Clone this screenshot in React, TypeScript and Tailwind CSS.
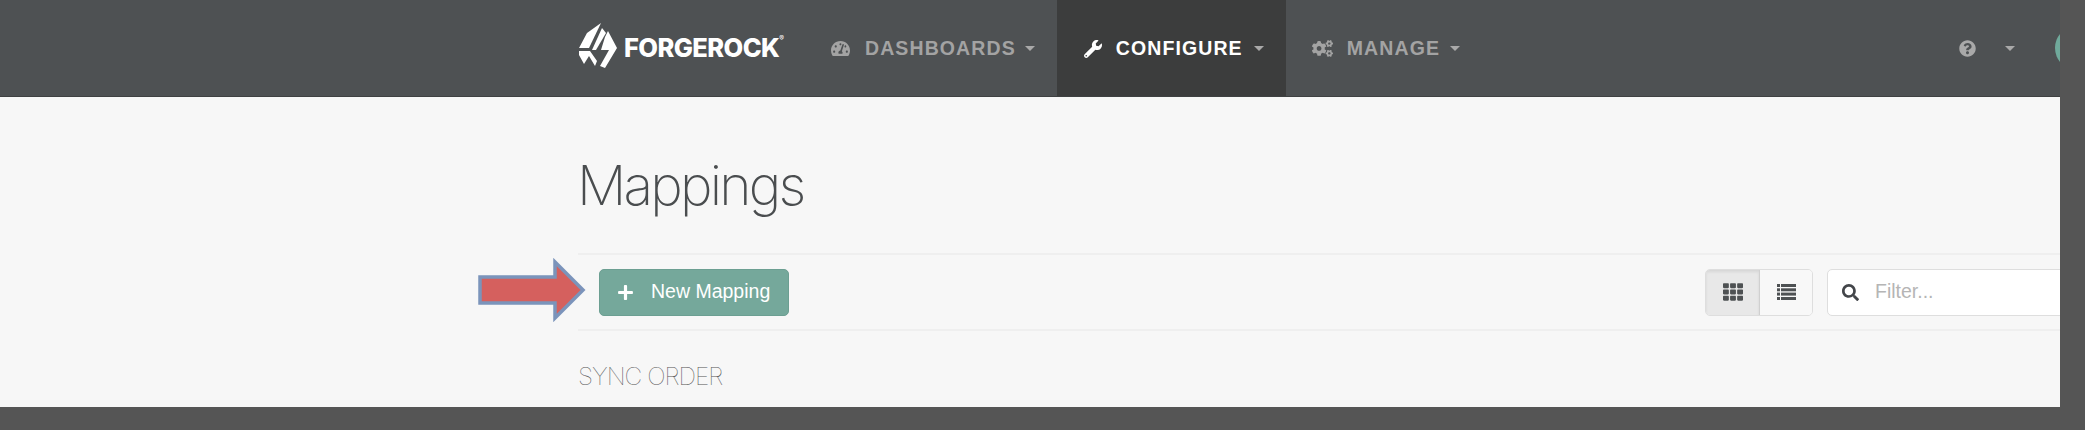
import {
  FaCogs,
  FaPlus,
  FaQuestionCircle,
  FaSearch,
  FaTachometerAlt,
  FaTh,
  FaWrench,
} from "react-icons/fa";

const sans = "font-['Liberation_Sans',Arial,sans-serif]";

function Caret() {
  return (
    <span className="inline-block w-0 h-0 border-x-[5.5px] border-x-transparent border-t-[5.5px] border-t-[#a9a9a9]" />
  );
}

function Logo() {
  return (
    <div className="flex items-center w-[216px] h-[64px] mt-[-2px] gap-[6px] text-white">
      <svg width="40" height="46" viewBox="0 0 40 46" fill="#fff" className="shrink-0">
        <polygon points="1,25 9,10 23,0 11,25" />
        <polygon points="14,27 24,5 28,10 18,27" />
        <polygon points="30,8 39,25 27,45 22,43 31,27 23,27 27,14" />
        <polygon points="1,28 12,28 19,38 17,43 11,33 6,41 1,32" />
      </svg>
      <span className="flex items-start font-['Inter',sans-serif] font-extrabold text-[25.5px] tracking-[-0.6px] leading-none mt-[4px]">
        FORGEROCK
        <span className="text-[7px] font-normal tracking-normal">®</span>
      </span>
    </div>
  );
}

function ListIcon() {
  return (
    <svg width="19" height="16" viewBox="0 0 19 16" fill="currentColor">
      <rect x="0" y="0" width="3" height="3" />
      <rect x="4" y="0" width="15" height="3" />
      <rect x="0" y="4.3" width="3" height="3" />
      <rect x="4" y="4.3" width="15" height="3" />
      <rect x="0" y="8.6" width="3" height="3" />
      <rect x="4" y="8.6" width="15" height="3" />
      <rect x="0" y="13" width="3" height="3" />
      <rect x="4" y="13" width="15" height="3" />
    </svg>
  );
}

export default function App() {
  return (
    <div className={`w-[2085px] h-[430px] bg-[#555555] overflow-hidden ${sans}`}>
      <div className="relative w-[2060px] h-[407px] bg-[#f7f7f7] overflow-hidden">
        <nav className="h-[97px] bg-[#4e5153] border-b-[1px] border-[#3f4142] flex items-stretch pl-[578px]">
          <div className="flex items-center mt-[-2px]">
            <Logo />
          </div>
          <div className="flex items-center pt-[1px] pl-[37px] pr-[22px] gap-[15px] text-[#a3a3a3] font-bold text-[19.5px] tracking-[1.1px]">
            <FaTachometerAlt className="text-[19px]" />
            <span className="mr-[-6px]">DASHBOARDS</span>
            <Caret />
          </div>
          <div className="flex items-center pt-[1px] w-[229px] bg-[#3c3d3d] pl-[27px] gap-[14px] text-white font-bold text-[19.5px] tracking-[1.1px]">
            <FaWrench className="text-[18px]" />
            <span className="mr-[-3px]">CONFIGURE</span>
            <Caret />
          </div>
          <div className="flex items-center pt-[1px] pl-[26px] gap-[14px] text-[#a3a3a3] font-bold text-[19.5px] tracking-[1.1px]">
            <FaCogs className="text-[21px]" />
            <span className="mr-[-4px]">MANAGE</span>
            <Caret />
          </div>
          <div className="flex items-center ml-auto text-[#a9a9a9]">
            <FaQuestionCircle className="text-[17px]" />
            <span className="ml-[29px] flex">
              <Caret />
            </span>
            <span className="w-[44px] h-[44px] ml-[40px] mr-[-39px] rounded-full bg-[#6fa99b]" />
          </div>
        </nav>

        <main className="pl-[578px]">
          <h1 className="font-['Inter',sans-serif] font-extralight text-[#4a4d4f] text-[55px] leading-none tracking-[-2.8px] -ml-[1px] pt-[61px] h-[156px]">
            Mappings
          </h1>
          <div className="flex items-center justify-between h-[78px] w-[1600px] border-y-2 border-[#efefef] pl-[21px]">
            <button className="flex items-center h-[47px] w-[190px] rounded-[5px] bg-[#75a89b] border border-[#6c9f92] text-white text-[19.5px] pl-[17px] gap-[17px]">
              <FaPlus className="text-[17px]" />
              New Mapping
            </button>
            <div className="flex items-center gap-[14px] ml-auto">
              <div className="flex h-[47px] w-[108px] rounded-[5px] border border-[#dedede] text-[#4e5153] overflow-hidden">
                <span className="flex items-center justify-center w-[54px] bg-[#e8e8e8] border-r border-[#d0d0d0] shadow-[inset_0_2px_3px_rgba(0,0,0,0.08)]">
                  <FaTh className="text-[20px]" />
                </span>
                <span className="flex items-center justify-center flex-1 bg-[#f8f8f8]">
                  <ListIcon />
                </span>
              </div>
              <div className="flex items-center h-[47px] w-[351px] rounded-[5px] border border-[#dedede] bg-white pl-[14px] gap-[16px] text-[#b5b5b5] text-[19.5px]">
                <FaSearch className="text-[17px] text-[#43464a]" />
                Filter...
              </div>
            </div>
          </div>
          <h2 className="font-['Inter',sans-serif] font-thin text-[#555] text-[24.5px] tracking-[-1px] leading-none mt-[33px]">
            SYNC ORDER
          </h2>
        </main>

        {/* annotation arrow drawn over the page */}
        <svg className="absolute left-[477px] top-[258px]" width="110" height="64" viewBox="0 0 110 64">
          <polygon
            points="3,19 78,19 78,4 106,32 78,60 78,45 3,45"
            fill="#d5605e"
            stroke="#7b94bb"
            strokeWidth="3.5"
          />
        </svg>
      </div>
    </div>
  );
}
